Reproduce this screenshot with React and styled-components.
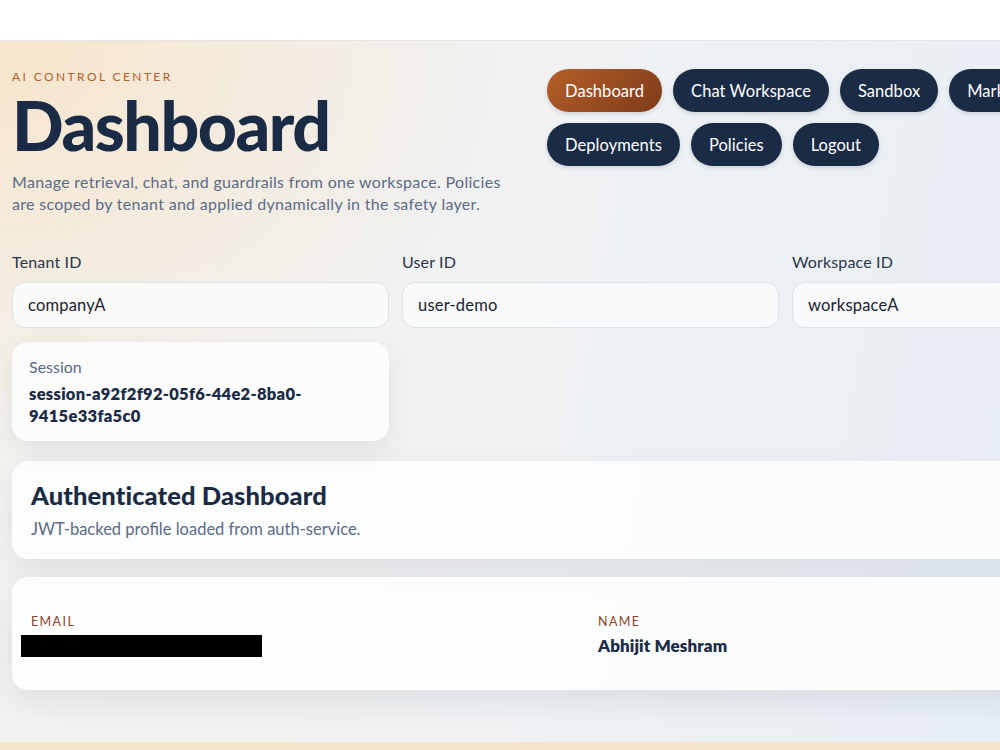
import React from 'react';
import styled, { createGlobalStyle } from 'styled-components';

const GlobalStyle = createGlobalStyle`
  html, body {
    margin: 0;
    padding: 0;
    background: #f6e4cb;
    overflow: hidden;
  }
  body {
    font-family: Lato, "Open Sans", sans-serif;
    color: #1a2b45;
  }
`;

const TopBar = styled.div`
  height: 40px;
  background: #ffffff;
  border-bottom: 1px solid #e4e4e4;
`;

const Main = styled.main`
  height: 701px;
  background:
    radial-gradient(ellipse 520px 420px at 0 0, rgba(247, 228, 202, 0.95), rgba(247, 228, 202, 0) 100%),
    linear-gradient(100deg, #f3f2ef 0%, #eff1f3 55%, #e7eef5 100%);
`;

const Container = styled.div`
  width: 1157px;
  padding: 28px 12px 0;
`;

const Header = styled.header`
  display: flex;
  gap: 35px;
  align-items: flex-start;
`;

const TitleBlock = styled.div`
  width: 500px;
  flex-shrink: 0;
`;

const Eyebrow = styled.div`
  font-size: 12px;
  letter-spacing: 2.4px;
  text-transform: uppercase;
  color: #b4612c;
  line-height: 16px;
`;

const Title = styled.h1`
  margin: 4px 0 0;
  font-size: 68px;
  font-weight: 900;
  line-height: 72px;
  letter-spacing: -1.5px;
  color: #1a2b45;
`;

const Lead = styled.p`
  margin: 10px 0 0;
  font-size: 16px;
  letter-spacing: 0.3px;
  line-height: 22px;
  color: #5b6b86;
`;

const Nav = styled.nav`
  display: flex;
  flex-wrap: wrap;
  gap: 11px;
`;

const Pill = styled.button`
  height: 43px;
  padding: 0 18px;
  border: none;
  border-radius: 22px;
  font-family: inherit;
  font-size: 16.5px;
  letter-spacing: 0.05px;
  color: #ffffff;
  background: ${p => (p.$active ? 'linear-gradient(135deg, #b65f27 0%, #7d3a1b 100%)' : '#1a2b45')};
  box-shadow: 0 2px 4px rgba(26, 43, 69, 0.15);
  white-space: nowrap;
`;

const FieldGrid = styled.div`
  display: grid;
  grid-template-columns: repeat(3, 1fr);
  column-gap: 13px;
  row-gap: 14px;
  margin-top: 37px;
`;

const Field = styled.label`
  display: flex;
  flex-direction: column;
  gap: 10px;
`;

const FieldLabel = styled.span`
  font-size: 16px;
  letter-spacing: 0.15px;
  line-height: 20px;
  color: #2a3548;
`;

const Input = styled.input`
  height: 46px;
  box-sizing: border-box;
  border: 1px solid #dde2e8;
  border-radius: 13px;
  background: rgba(250, 251, 252, 0.85);
  padding: 0 15px;
  font-family: inherit;
  font-size: 16.5px;
  letter-spacing: 0.2px;
  color: #1b2230;
  outline: none;
`;

const SessionCard = styled.div`
  background: #fcfcfd;
  border-radius: 16px;
  padding: 14px 17px 14px;
  box-shadow: 0 10px 24px rgba(30, 45, 70, 0.08);
`;

const SessionLabel = styled.div`
  font-size: 16px;
  line-height: 22px;
  color: #5b6b86;
`;

const SessionValue = styled.div`
  margin-top: 5px;
  font-size: 16.5px;
  letter-spacing: 0.3px;
  font-weight: 800;
  line-height: 22px;
  color: #1a2b45;
  max-width: 300px;
`;

const Card = styled.section`
  margin-top: ${p => p.$gap || 20}px;
  background: rgba(252, 253, 253, 0.95);
  border-radius: 16px;
  padding: ${p => p.$pad || '20px 19px'};
  box-shadow: 0 12px 30px rgba(30, 45, 70, 0.09);
`;

const CardTitle = styled.h2`
  margin: 0;
  font-size: 25.5px;
  font-weight: 900;
  letter-spacing: 0.1px;
  line-height: 28px;
  color: #1a2b45;
`;

const CardText = styled.p`
  margin: 10px 0 0;
  font-size: 16.5px;
  line-height: 20px;
  color: #5b6b86;
`;

const InfoGrid = styled.div`
  display: grid;
  grid-template-columns: repeat(2, 1fr);
  gap: 15px;
`;

const InfoItem = styled.div`
  display: flex;
  flex-direction: column;
  gap: 5px;
`;

const InfoLabel = styled.span`
  font-size: 12.5px;
  letter-spacing: 1.4px;
  text-transform: uppercase;
  color: #8c452a;
  line-height: 16px;
`;

const InfoValue = styled.span`
  font-size: 17px;
  font-weight: 800;
  letter-spacing: 0.1px;
  line-height: 22px;
  color: #1a2b45;
`;

const Redacted = styled.span`
  display: block;
  width: 241px;
  height: 22px;
  margin-left: -10px;
  background: #000000;
`;

const navItems = ['Dashboard', 'Chat Workspace', 'Sandbox', 'Marketplace', 'Deployments', 'Policies', 'Logout'];

const fields = [
  { label: 'Tenant ID', value: 'companyA' },
  { label: 'User ID', value: 'user-demo' },
  { label: 'Workspace ID', value: 'workspaceA' },
];

export default function App() {
  return (
    <>
      <GlobalStyle />
      <TopBar />
      <Main>
        <Container>
          <Header>
            <TitleBlock>
              <Eyebrow>AI Control Center</Eyebrow>
              <Title>Dashboard</Title>
              <Lead>
                Manage retrieval, chat, and guardrails from one workspace. Policies are scoped by
                tenant and applied dynamically in the safety layer.
              </Lead>
            </TitleBlock>
            <Nav>
              {navItems.map(item => (
                <Pill key={item} $active={item === 'Dashboard'}>{item}</Pill>
              ))}
            </Nav>
          </Header>

          <FieldGrid>
            {fields.map(f => (
              <Field key={f.label}>
                <FieldLabel>{f.label}</FieldLabel>
                <Input defaultValue={f.value} />
              </Field>
            ))}
            <SessionCard>
              <SessionLabel>Session</SessionLabel>
              <SessionValue>session-a92f2f92-05f6-44e2-8ba0-9415e33fa5c0</SessionValue>
            </SessionCard>
          </FieldGrid>

          <Card $gap={20}>
            <CardTitle>Authenticated Dashboard</CardTitle>
            <CardText>JWT-backed profile loaded from auth-service.</CardText>
          </Card>

          <Card $gap={18} $pad="37px 19px 33px">
            <InfoGrid>
              <InfoItem>
                <InfoLabel>Email</InfoLabel>
                <Redacted />
              </InfoItem>
              <InfoItem>
                <InfoLabel>Name</InfoLabel>
                <InfoValue>Abhijit Meshram</InfoValue>
              </InfoItem>
            </InfoGrid>
          </Card>
        </Container>
      </Main>
    </>
  );
}
